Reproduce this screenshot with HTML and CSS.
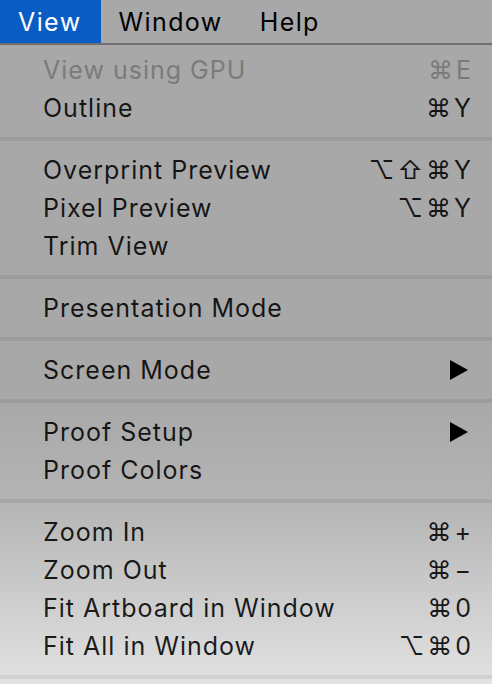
FILE: index.html
```html
<!DOCTYPE html>
<html lang="en">
  <head>
    <meta charset="UTF-8" />
    <meta name="viewport" content="width=device-width, initial-scale=1.0" />
    <title>View Menu</title>
    <link rel="stylesheet" href="styles.css">
  </head>
  <body>
    <div class="menubar">
      <span class="menubar-item active">View</span>
      <span class="menubar-item">Window</span>
      <span class="menubar-item">Help</span>
    </div>

    <div class="menu">
      <div class="item disabled">
        <span class="label">View using GPU</span>
        <span class="shortcut">⌘E</span>
      </div>
      <div class="item">
        <span class="label">Outline</span>
        <span class="shortcut">⌘Y</span>
      </div>
      <div class="separator"></div>

      <div class="item">
        <span class="label">Overprint Preview</span>
        <span class="shortcut">⌥⇧⌘Y</span>
      </div>
      <div class="item">
        <span class="label">Pixel Preview</span>
        <span class="shortcut">⌥⌘Y</span>
      </div>
      <div class="item">
        <span class="label">Trim View</span>
      </div>
      <div class="separator"></div>

      <div class="item">
        <span class="label">Presentation Mode</span>
      </div>
      <div class="separator"></div>

      <div class="item">
        <span class="label">Screen Mode</span>
        <span class="arrow"></span>
      </div>
      <div class="separator"></div>

      <div class="item">
        <span class="label">Proof Setup</span>
        <span class="arrow"></span>
      </div>
      <div class="item">
        <span class="label">Proof Colors</span>
      </div>
      <div class="separator"></div>

      <div class="item">
        <span class="label">Zoom In</span>
        <span class="shortcut">⌘+</span>
      </div>
      <div class="item">
        <span class="label">Zoom Out</span>
        <span class="shortcut">⌘−</span>
      </div>
      <div class="item">
        <span class="label">Fit Artboard in Window</span>
        <span class="shortcut">⌘0</span>
      </div>
      <div class="item">
        <span class="label">Fit All in Window</span>
        <span class="shortcut">⌥⌘0</span>
      </div>
      <div class="separator"></div>
    </div>
  </body>
</html>
```

FILE: styles.css
```css
body {
  margin: 0;
  width: 492px;
  height: 684px;
  overflow: hidden;
  font-family: Inter, "DejaVu Sans", sans-serif;
  font-size: 25px;
  letter-spacing: 1px;
  color: rgba(0, 0, 0, 0.88);
  background: linear-gradient(#a8a8a8 0%, #a8a8a8 58%, #b4b4b4 73%, #e2e2e2 100%);
}
.menubar {
  display: flex;
  height: 43px;
  border-bottom: 2px solid #6f6f6f;
  color: #000;
  letter-spacing: 1.4px;
}
.menubar-item {
  display: flex;
  align-items: center;
  padding: 0 19px 0 18px;
}
.menubar-item.active {
  background-color: #0a5bc4;
  color: white;
}
.menu {
  padding-top: 6px;
}
.item {
  display: flex;
  align-items: center;
  justify-content: space-between;
  height: 38px;
  padding: 0 21px 0 43px;
}
.item.disabled {
  color: #7b7b7b;
}
.shortcut {
  letter-spacing: 3px;
  margin-right: -3px;
}
.arrow {
  width: 0;
  height: 0;
  margin-right: 3px;
  border-top: 10px solid transparent;
  border-bottom: 10px solid transparent;
  border-left: 18px solid #000;
}
.separator {
  height: 4px;
  margin: 10px 0;
  background-color: rgba(0, 0, 0, 0.07);
}
```
